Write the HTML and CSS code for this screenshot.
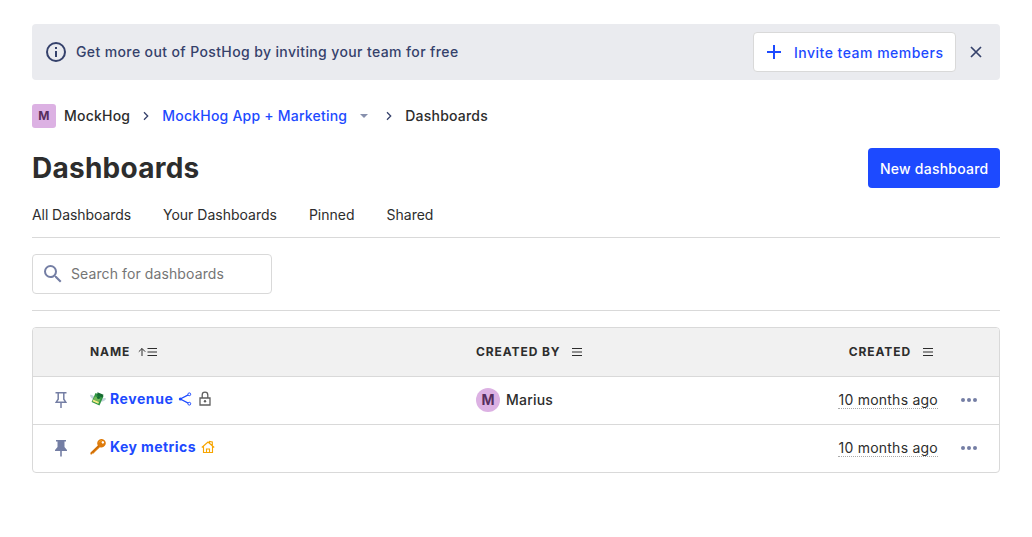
FILE: index.html
```html
<!DOCTYPE html>
<html lang="en">
<head>
<meta charset="utf-8">
<title>Dashboards</title>
<link rel="stylesheet" href="styles.css">
</head>
<body>
<main class="page">
  <section class="banner">
    <svg class="icon24 banner-icon" viewBox="0 0 24 24"><path fill="currentColor" d="M11 7h2v2h-2zm0 4h2v6h-2zm1-9a10 10 0 1 0 0 20 10 10 0 0 0 0-20zm0 18a8 8 0 1 1 0-16 8 8 0 0 1 0 16z"/></svg>
    <span class="banner-text">Get more out of PostHog by inviting your team for free</span>
    <button class="button secondary"><svg viewBox="0 0 16 16" width="16" height="16"><path fill="currentColor" d="M7 1h2v6h6v2H9v6H7V9H1V7h6z"/></svg><span>Invite team members</span></button>
    <button class="close" aria-label="close"><svg viewBox="0 0 16 16" width="16" height="16"><path d="M3 3l10 10M13 3L3 13" stroke="currentColor" stroke-width="1.7"/></svg></button>
  </section>
  <nav class="crumbs">
    <span class="lettermark">M</span>
    <span class="crumb org">MockHog</span>
    <svg class="chevron" viewBox="0 0 8 12"><path d="M2 2.3L5.7 6 2 9.7"/></svg>
    <a class="crumb project">MockHog App + Marketing</a>
    <svg class="caret" viewBox="0 0 8 4"><path d="M0 0h8L4 4z" fill="#8790ad"/></svg>
    <svg class="chevron second" viewBox="0 0 8 12"><path d="M2 2.3L5.7 6 2 9.7"/></svg>
    <span class="crumb">Dashboards</span>
  </nav>
  <header class="title-row">
    <h1>Dashboards</h1>
    <button class="button primary">New dashboard</button>
  </header>
  <nav class="tabs"><a class="all">All Dashboards</a><a>Your Dashboards</a><a>Pinned</a><a>Shared</a></nav>
  <div class="filters">
    <label class="search">
      <svg class="icon24" viewBox="0 0 24 24"><path fill="currentColor" d="M15.5 14h-.79l-.28-.27A6.47 6.47 0 0 0 16 9.5 6.5 6.5 0 1 0 9.5 16c1.61 0 3.09-.59 4.23-1.57l.27.28v.79l5 4.99L20.49 19l-4.99-5zm-6 0a4.5 4.5 0 1 1 0-9 4.5 4.5 0 0 1 0 9z"/></svg>
      <input type="text" placeholder="Search for dashboards">
    </label>
  </div>
  <div class="table">
    <div class="row head">
      <span></span>
      <span class="th">Name <svg class="sort up" viewBox="0 0 20 10"><path d="M4 9V1.500M.8 4.700L4 1.500l3.200 3.200M9.500 1.500h9.500M9.500 5h9.500M9.500 8.500h9.500"/></svg></span>
      <span class="th">Created by <svg class="sort" viewBox="0 0 10 10"><path d="M0 1.500h10M0 5h10M0 8.500h10"/></svg></span>
      <span class="th right">Created <svg class="sort" viewBox="0 0 10 10"><path d="M0 1.500h10M0 5h10M0 8.500h10"/></svg></span>
      <span></span>
    </div>
    <div class="row">
      <svg class="pin" viewBox="0 0 12 18"><path d="M.5 1.700h11M3.200 2v6.200L1.200 11.200h9.600L8.800 8.200V2M6 11v6" fill="none" stroke="currentColor" stroke-width="1.500"/></svg>
      <span class="name">
        <svg class="emoji" viewBox="0 0 16 16"><path d="M4.500 6.500C3.500 4.300 1.500 3.300 0 4c.2 1.600 1 3.100 3 3.900M11 9c1-1.500 3-2.600 5-1.500-.3 1.700-1.800 2.900-4.500 3.200" fill="#c5d3dc"/><path d="M5.500 2L13.500 5.300 9.500 14.500 1.600 11z" fill="#2f9543"/><path d="M7.500 1.200l6 2.600-1 2.600-5.500-2z" fill="#166b31"/><path d="M4.800 5.200L10.500 7.700l-1.300 3.300-5.700-2.500z" fill="#72b858"/><path d="M3.200 8.500l5.800 2.500-.7 1.700-5.800-2.500z" fill="#f5eb86"/><circle cx="8.500" cy="6.600" r="1.500" fill="#136d31"/></svg>
        <a class="revenue">Revenue</a>
        <svg class="share" viewBox="0 0 14 14"><path d="M11.200 2.400L2.300 7l8.900 4.600" fill="none" stroke="currentColor" stroke-width="1.200"/><circle cx="11.300" cy="2.300" r="1.400" fill="#fff" stroke="currentColor"/><circle cx="11.300" cy="11.700" r="1.400" fill="#fff" stroke="currentColor"/><circle cx="2.300" cy="7" r="1.500" fill="currentColor"/></svg>
        <svg class="lock" viewBox="0 0 14 16"><path d="M2 7h10v7H2zM4.200 7V4a2.800 2.800 0 0 1 5.600 0v3" fill="none" stroke="currentColor" stroke-width="1.300"/><circle cx="7" cy="10.200" r="1.200" fill="currentColor"/></svg>
      </span>
      <span class="person"><i class="avatar">M</i>Marius</span>
      <span class="right"><span class="date">10 months ago</span></span>
      <svg class="more" viewBox="0 0 16 4"><circle cx="2" cy="2" r="2"/><circle cx="8" cy="2" r="2"/><circle cx="14" cy="2" r="2"/></svg>
    </div>
    <div class="row">
      <svg class="pin" viewBox="0 0 12 18"><path d="M1 1h10v1.500H9.500V8l2.500 3v1H6.800v5.500H5.200V12H0v-1l2.500-3V2.500H1z" fill="currentColor"/></svg>
      <span class="name">
        <svg class="emoji" viewBox="0 0 16 16"><path fill="#de7b0b" fill-rule="evenodd" d="M8.300 1.600a4.200 4.200 0 0 1 5.900-.6l.8.800a4.300 4.300 0 0 1-5.100 6.400L4.400 13.400l-.5 1.100-1.200-.2-.8 1.200L.3 15.200l.2-1.600L7.800 6.500a4.300 4.300 0 0 1 .5-4.900zM12 2.500a1.200 1.200 0 1 0 1.700 1.700A1.200 1.200 0 0 0 12 2.500z"/><path d="M1.200 14.200l7.700-7.400" stroke="#b95e09" stroke-width=".8"/><path d="M9 3.500a2.800 2.800 0 0 1 3-1.800" fill="none" stroke="#f9a52b"/></svg>
        <a>Key metrics</a>
        <svg class="home" viewBox="0 0 14 14"><path d="M.8 7.500L7 2l6.200 5.500M2.500 6.500v6h9v-6M5.500 12.500V9h3v3.500M8.500 3V1.500l2.800.5v3.200" fill="none" stroke="currentColor" stroke-width="1.150"/></svg>
      </span>
      <span></span>
      <span class="right"><span class="date">10 months ago</span></span>
      <svg class="more" viewBox="0 0 16 4"><circle cx="2" cy="2" r="2"/><circle cx="8" cy="2" r="2"/><circle cx="14" cy="2" r="2"/></svg>
    </div>
  </div>
</main>
</body>
</html>
```
FILE: styles.css
```css
* { box-sizing: border-box; }
body { margin: 0; background: #fff; color: #2d2d2d; font: 14px/20px Inter, sans-serif; }
svg { flex: none; display: block; }
button, input { font: inherit; }
.page { padding: 24px 32px; }
.icon24 { width: 24px; height: 24px; }
.banner { display: flex; align-items: center; height: 56px; padding: 0 12px; border-radius: 4px; background: #eaebef; color: #35416b; font-weight: 500; }
.banner-text { margin-left: 8px; flex: 1; letter-spacing: .38px; }
.button { height: 40px; display: flex; align-items: center; border-radius: 4px; font-weight: 500; padding: 2px 12px 0; white-space: nowrap; }
.secondary { border: 1px solid #d9d9d9; background: #fff; color: #1d4aff; gap: 12px; width: 203px; letter-spacing: .49px; }
.secondary svg { margin-top: -2px; }
.primary { border: 0; background: #1d4aff; color: #fff; width: 132px; letter-spacing: .23px; }
.close { border: 0; background: none; padding: 0; margin: 0 4px 0 12px; color: #35416b; }
.crumbs { display: flex; align-items: center; height: 24px; margin-top: 24px; font-weight: 500; letter-spacing: .22px; }
.lettermark { width: 24px; height: 24px; border-radius: 3px; background: #dcb1e3; color: #572e5e; font-size: 12px; font-weight: 700; line-height: 24px; text-align: center; margin-right: 8px; }
.chevron { width: 8px; height: 12px; margin: 0 12px; fill: none; stroke: #35416b; stroke-width: 1.300; }
.project, .name a { color: #1d4aff; }
.project { width: 186px; white-space: nowrap; }
.caret { width: 8px; height: 4px; margin-left: 12px; }
.second { margin-left: 17px; }
.title-row { display: flex; justify-content: space-between; align-items: center; margin-top: 20px; }
h1 { margin: 0; font-size: 28px; line-height: 40px; font-weight: 700; letter-spacing: .25px; }
.tabs { display: flex; gap: 32px; height: 50px; padding-top: 17px; border-bottom: 1px solid #d9d9d9; }
.tabs .all { letter-spacing: -.07px; }
.filters { padding: 16px 0; border-bottom: 1px solid #d9d9d9; }
.search { display: flex; align-items: center; width: 240px; height: 40px; border: 1px solid #d9d9d9; border-radius: 4px; padding: 0 8px; color: #747ea4; }
.search input { border: 0; outline: 0; width: 180px; padding: 0; margin-left: 6px; background: none; letter-spacing: .1px; }
.search input::placeholder { color: #757575; opacity: 1; }
.table { margin-top: 16px; border: 1px solid #d9d9d9; border-radius: 4px; overflow: hidden; }
.row { display: grid; grid-template-columns: 57px 386px 1fr 200px 61px; align-items: center; height: 48px; padding-bottom: 2px; border-top: 1px solid #d9d9d9; }
.head { height: 48px; padding: 0; border: 0; background: #f1f1f1; }
.th { display: flex; align-items: center; font-size: 12px; font-weight: 700; letter-spacing: .9px; text-transform: uppercase; }
.sort { width: 10px; height: 10px; margin-left: 12px; fill: none; stroke: #2d2d2d; stroke-width: 1; }
.up { width: 20px; margin-left: 8px; }
.right { justify-self: end; }
.th.right { margin-right: 5px; }
.pin { width: 12px; height: 18px; margin-left: 22px; color: #747ea4; }
.name { display: flex; align-items: center; font-weight: 700; height: 20px; margin-top: -2px; letter-spacing: .43px; }
.name .revenue { letter-spacing: .57px; }
.emoji { width: 16px; height: 16px; margin-right: 4px; }
.share { width: 14px; height: 14px; margin-left: 5px; color: #1d4aff; }
.lock { width: 14px; height: 16px; margin-left: 6px; color: #5f5f5f; }
.home { width: 14px; height: 14px; margin-left: 5px; color: #f7a501; }
.person { display: flex; align-items: center; font-weight: 500; letter-spacing: .2px; }
.avatar { width: 24px; height: 24px; margin-right: 6px; border-radius: 50%; background: #dcb1e3; color: #572e5e; font-style: normal; font-weight: 700; line-height: 24px; text-align: center; }
.date { display: block; height: 19px; border-bottom: 1px dotted #aaa; letter-spacing: .24px; }
.more { width: 16px; height: 4px; margin-left: 23px; fill: #747ea4; }
```
